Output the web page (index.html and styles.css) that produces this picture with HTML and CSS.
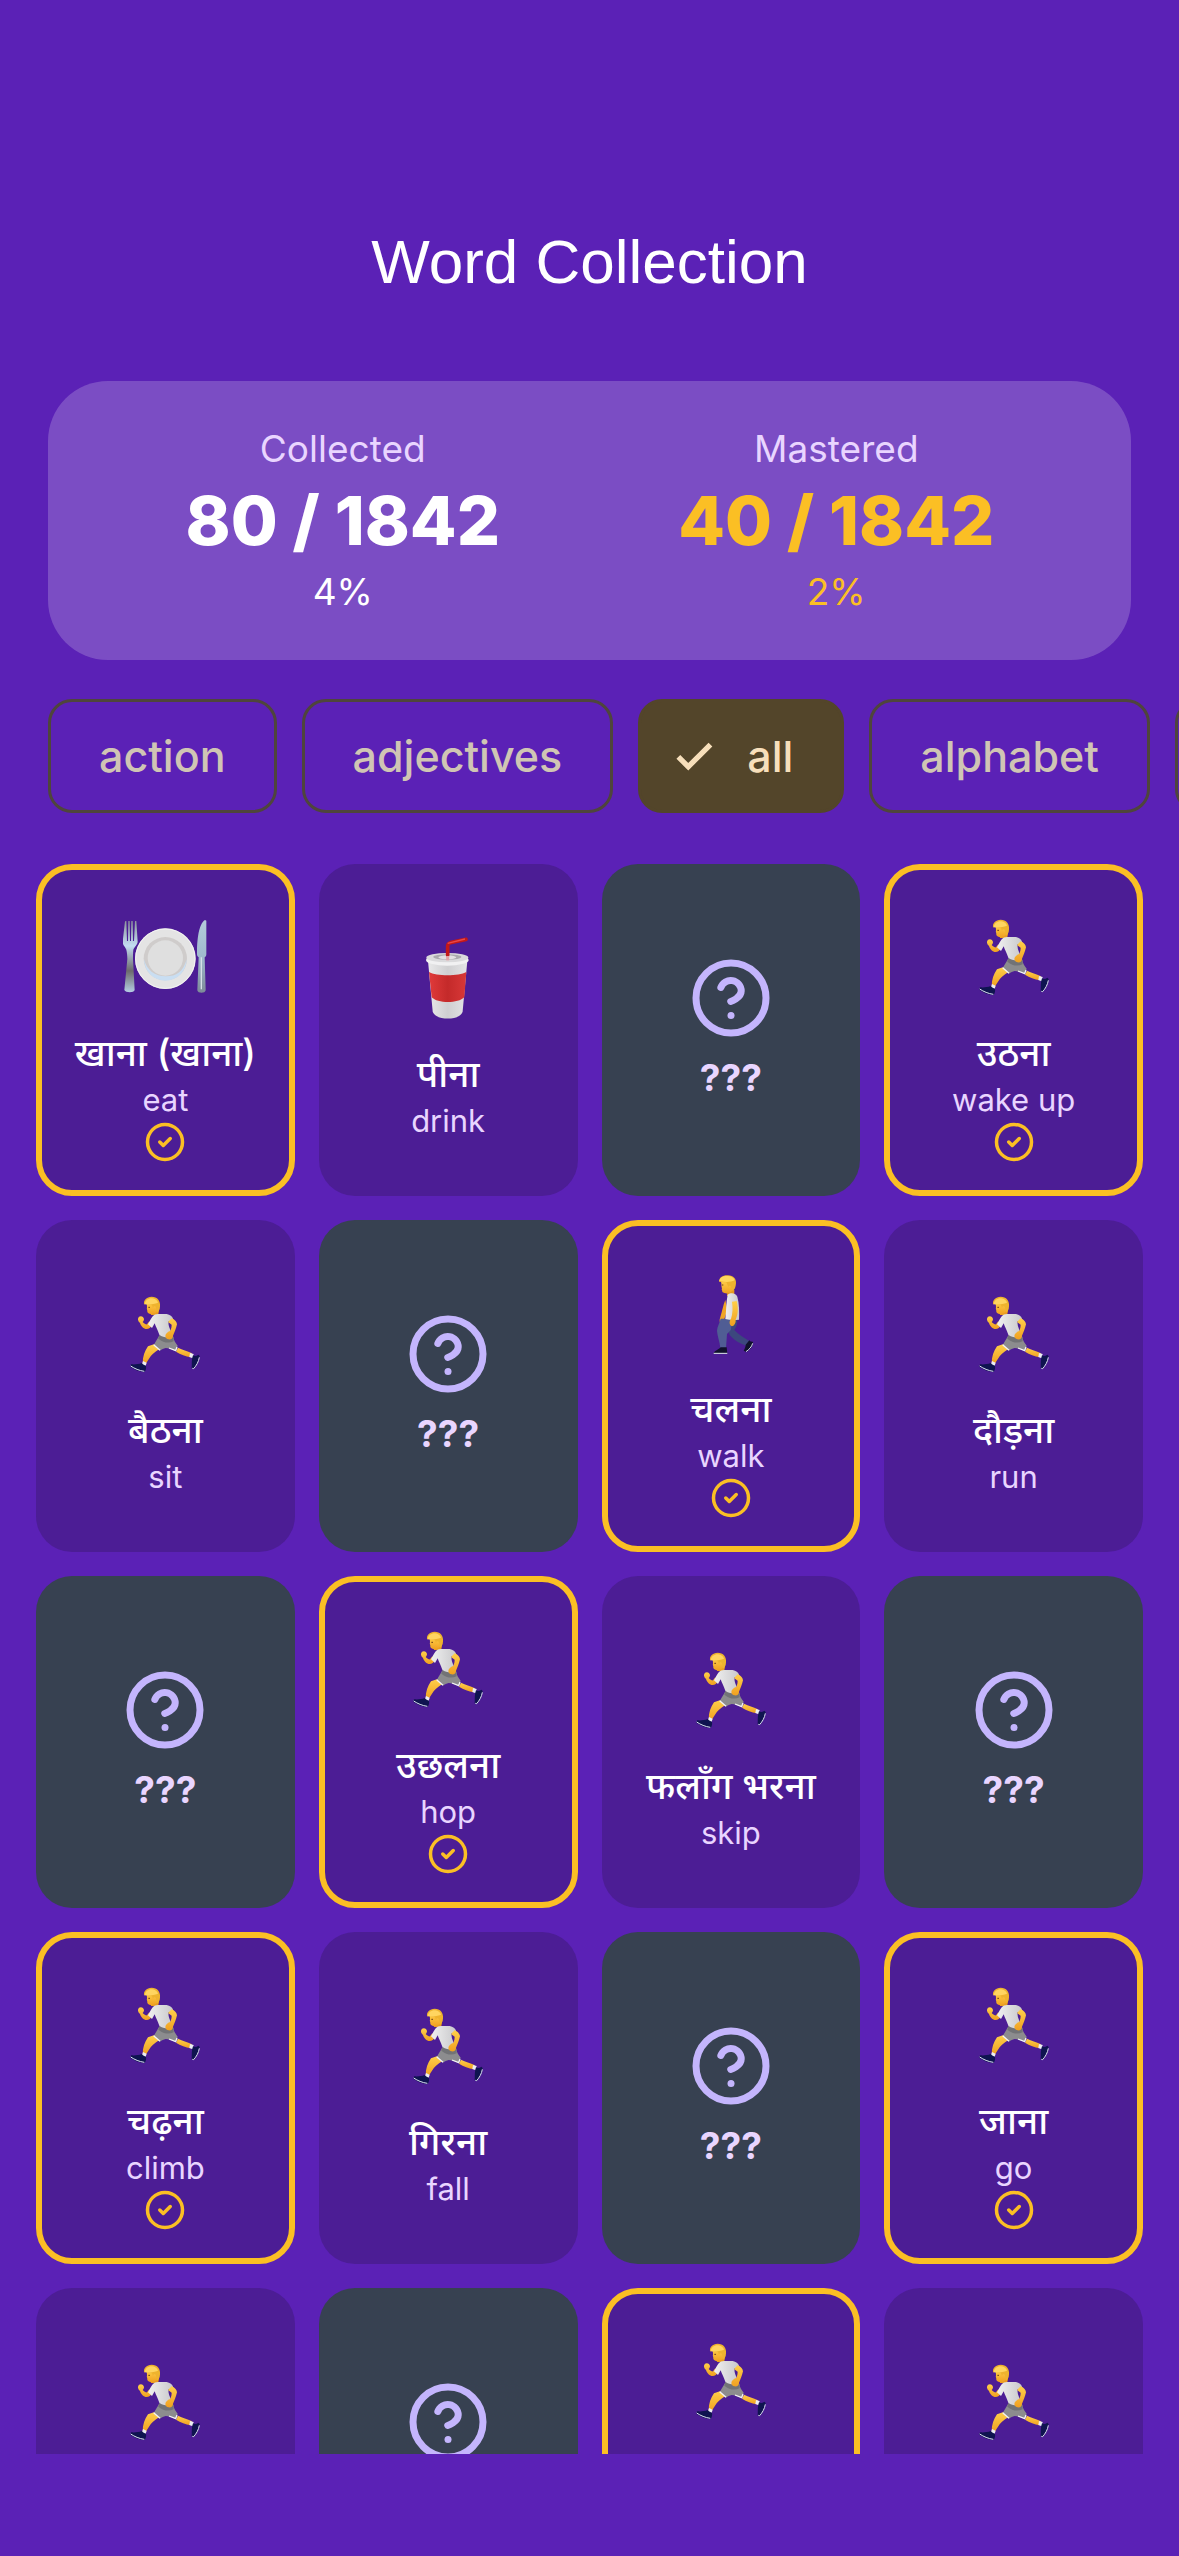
FILE: index.html
```html
<!DOCTYPE html>
<html lang="en">
<head>
    <meta charset="UTF-8">
    <meta name="viewport" content="width=device-width, initial-scale=1.0">
    <title>Word Collection</title>
    <link rel="stylesheet" href="styles.css">
</head>
<body>

<!-- shared icons -->
<svg class="sprite" aria-hidden="true">
  <defs>
    <linearGradient id="skin" x1="0" y1="0" x2="0" y2="1">
      <stop offset="0" stop-color="#ffd04a"/>
      <stop offset="1" stop-color="#f0a020"/>
    </linearGradient>
    <linearGradient id="steel" x1="0" y1="0" x2="0" y2="1">
      <stop offset="0" stop-color="#8d949c"/>
      <stop offset=".35" stop-color="#c3dcf2"/>
      <stop offset=".7" stop-color="#6c6a6c"/>
      <stop offset="1" stop-color="#b5cde4"/>
    </linearGradient>
    <linearGradient id="blade" x1="0" y1="0" x2="0" y2="1">
      <stop offset="0" stop-color="#b4cbdb"/>
      <stop offset=".5" stop-color="#9fbace"/>
      <stop offset="1" stop-color="#7d8b98"/>
    </linearGradient>
    <linearGradient id="red" x1="0" y1="0" x2="1" y2="0">
      <stop offset="0" stop-color="#e03a3a"/>
      <stop offset=".5" stop-color="#c42a2a"/>
      <stop offset="1" stop-color="#d83838"/>
    </linearGradient>
    <linearGradient id="paper" x1="0" y1="0" x2="1" y2="0">
      <stop offset="0" stop-color="#e9e9ea"/>
      <stop offset=".5" stop-color="#cfcfd1"/>
      <stop offset="1" stop-color="#e4e4e6"/>
    </linearGradient>
    <linearGradient id="shirt" x1="0" y1="0" x2="1" y2="0">
      <stop offset="0" stop-color="#f0f0f0"/>
      <stop offset="1" stop-color="#c9c9cc"/>
    </linearGradient>
  </defs>

  <symbol id="help" viewBox="0 0 24 24">
    <g fill="none" stroke="currentColor" stroke-width="2" stroke-linecap="round" stroke-linejoin="round">
      <circle cx="12" cy="12" r="10"/>
      <path d="M9.09 9a3 3 0 0 1 5.83 1c0 2-3 3-3 3"/>
      <path d="M12 17h.01"/>
    </g>
  </symbol>

  <symbol id="mastered" viewBox="0 0 24 24">
    <g fill="none" stroke="currentColor" stroke-width="2" stroke-linecap="round" stroke-linejoin="round">
      <circle cx="12" cy="12" r="10"/>
      <path d="M9 12l2 2 4-4"/>
    </g>
  </symbol>

  <symbol id="tick" viewBox="0 0 24 24">
    <path fill="currentColor" stroke="currentColor" stroke-width=".8" d="M9 16.17L4.83 12l-1.42 1.41L9 19 21 7l-1.41-1.41z"/>
  </symbol>

  <symbol id="runner" viewBox="275 195 252 252">
    <path d="M440 362c14 6 27 10 42 17l-4 12c-15-3-30-8-44-17z" fill="url(#skin)"/>
    <path d="M350 358l22-8 12 16c-16 10-24 18-31 29-5 8-8 12-10 18l-9-3c0-21 6-38 16-52z" fill="url(#skin)"/>
    <path d="M476 378l11 3-3 13-10-4z" fill="#eceef4"/>
    <path d="M485 385c6 3 10 2 16-2l4 4c-1 13-7 27-18 39l-6-2c1-12-1-27 4-39z" fill="#0f1450"/>
    <path d="M504 391c-2 13-9 25-17 34l-4-1" fill="none" stroke="#dfe4f4" stroke-width="3"/>
    <path d="M335 402l11 5-4 12-11-4z" fill="#eceef4"/>
    <path d="M331 408c4 5 8 7 13 8 1 6 0 13-4 19-16-1-31-7-43-16l2-7c11 1 22 0 32-4z" fill="#0f1450"/>
    <path d="M298 417c12 8 26 14 41 16" fill="none" stroke="#dfe4f4" stroke-width="3"/>
    <path d="M384 325l42 4c1 10 6 18 13 27l-5 16-24-8-7-1c-6 2-12 4-17 8l-18-18c5-10 11-18 16-28z" fill="#8c8c8e"/>
    <path d="M384 325l42 4 1 14c-14 6-29 6-46-8z" fill="#727376"/>
    <path d="M367 353l19 17M413 363l20 8 4-11" fill="none" stroke="#f4f4f6" stroke-width="4"/>
    <path d="M357 240h26c1 9 0 17-4 25l-20-1z" fill="#e99d22"/>
    <path d="M354 283l8 12c-4 7-9 11-16 11-9 0-17-8-20-18-7-6-8-14-3-19 7-4 14 0 15 7 0 4-2 7-4 9 5 5 10 8 13 7z" fill="url(#skin)"/>
    <path d="M363 269c6-8 14-9 22-8h21c10 2 17 7 19 14 1 4-1 8-3 10l-10-3c-3 14 6 27 13 45-13 8-30 4-41-4-5-14-11-25-14-34l-8 14-12-11c5-9 8-16 13-23z" fill="url(#shirt)"/>
    <path d="M421 274c9 4 15 10 16 18-3 14-8 25-12 34 0 8-6 13-14 11-8-2-11-9-7-16 5-6 9-8 13-9 3-7 4-14 4-19l-11-8z" fill="url(#skin)"/>
    <path d="M346 224h34l4 23c-6 9-14 14-24 15-6-1-9-3-12-7 1-6-3-8-1-14z" fill="url(#skin)"/>
    <path d="M339 234c-5-14 7-25 22-25 17 0 27 12 25 30-1 8-4 14-9 18l-3-16c-2-5-7-4-9 1l-3-7-22-5z" fill="#eeb32e"/>
    <path d="M340 232c1-12 11-19 23-18 9 1 15 6 17 13-12 4-24 7-40 5z" fill="#ffd560"/>
    <path d="M351 241h5" stroke="#6b4016" stroke-width="3"/>
  </symbol>

  <symbol id="walker" viewBox="297 183 252 252">
    <path d="M406 270c-7 16-9 33-15 51-4 8-2 19 3 24l8-15 10-30z" fill="#efa526"/>
    <path d="M410 326h32c1 12-2 25-9 34 13 14 29 23 45 33l-10 14c-23-9-43-20-52-38-5-12-7-26-6-43z" fill="#3c477e"/>
    <path d="M392 326h34l-3 33-12 13-3 42h-17c-2-20-9-36-10-52 1-14 8-23 11-36z" fill="#505d94"/>
    <path d="M478 391c4 5 7 4 11 4 1 13-9 24-20 31l-8-4c3-7 6-11 6-18z" fill="#10112c"/>
    <path d="M488 400c-3 11-11 19-20 25" fill="none" stroke="#d5dced" stroke-width="3"/>
    <path d="M392 412h18l2 19h-41c1-9 13-10 21-19z" fill="#10112c"/>
    <path d="M371 430h41" stroke="#e8ecf8" stroke-width="3"/>
    <path d="M412 240h21v18h-22z" fill="#e59a20"/>
    <path d="M413 254c11-8 25-4 29 6 6 20 6 47 5 69-13 2-28 2-41-2 3-24 2-50 7-73z" fill="url(#shirt)"/>
    <path d="M426 275l14-2c5 21 5 39-3 56 1 9-3 17-11 20-9-5-9-15-3-23 5-15 6-32 3-51z" fill="url(#skin)"/>
    <path d="M392 212h36l3 23c-4 8-9 14-17 15-6 1-13-1-17-4 1-5-4-6-1-11-3-5 0-14-4-23z" fill="url(#skin)"/>
    <path d="M387 215c0-13 12-20 27-19 17 0 25 11 24 24-1 12-4 20-10 23l-5-10c0-7-5-8-8-2l-6-14z" fill="#eeb32e"/>
    <path d="M388 213c1-10 12-16 25-15 11 0 19 5 21 13-14 7-29 6-46 2z" fill="#ffd75e"/>
    <path d="M396 225h4" stroke="#6b4016" stroke-width="3"/>
  </symbol>

  <symbol id="plate" viewBox="311 195 252 252">
    <path d="M317 214l4-1 2 60h3l1-60h4l1 60h3l1-60h4l1 60h3l3-60h4l4 62c0 9-10 15-13 24-1 8-1 20-1 28l5 93c-2 9-27 9-31 0l9-93c0-9-1-20-3-28-3-8-12-14-11-24z" fill="url(#steel)"/>
    <path d="M561 212v101c0 5-3 8-5 9l3 99c-1 10-24 10-25 0l4-99c-4-3-5-6-5-10 0-42 5-91 24-102z" fill="url(#blade)"/>
    <path d="M546 322v96" stroke="#d6dfe7" stroke-width="4"/>
    <circle cx="438" cy="326" r="91" fill="#e4e4e4"/>
    <circle cx="438" cy="326" r="89" fill="none" stroke="#f3f3f3" stroke-width="3"/>
    <circle cx="438" cy="326" r="65" fill="#cfcccb"/>
    <path d="M374 328a64 64 0 0 0 128 0c-10 38-31 51-62 51-34 0-57-17-66-51z" fill="#c9def2"/>
    <circle cx="438" cy="324" r="53" fill="#dfdfdf"/>
  </symbol>

  <symbol id="cup" viewBox="289 258 252 252">
    <path d="M355 332l14 152c5 29 86 29 90 0l14-152z" fill="url(#paper)"/>
    <path d="M358 366c22 13 89 13 112 0l-6 76c-18 19-81 19-98 0z" fill="url(#red)"/>
    <ellipse cx="413" cy="330" rx="64" ry="17" fill="#f1f1f2"/>
    <ellipse cx="413" cy="323" rx="63" ry="14" fill="#dadadc"/>
    <ellipse cx="413" cy="321" rx="42" ry="8" fill="#aaa9ad"/>
    <ellipse cx="413" cy="322" rx="27" ry="6" fill="#e2e0e2"/>
    <path d="M414 316v-28c0-5 3-8 8-10l47-10" fill="none" stroke="#c31818" stroke-width="11" stroke-linejoin="round" stroke-linecap="round"/>
    <path d="M414 280l52-13" fill="none" stroke="#e94848" stroke-width="4"/>
    <path d="M414 318v13" stroke="#e3a3a6" stroke-width="9"/>
  </symbol>
</svg>

<main class="app">
  <header class="app-bar">
    <h1>Word Collection</h1>
  </header>

  <section class="stats">
    <div class="stat">
      <span class="stat-label">Collected</span>
      <strong class="stat-value">80 / 1842</strong>
      <span class="stat-percent">4%</span>
    </div>
    <div class="stat stat-gold">
      <span class="stat-label">Mastered</span>
      <strong class="stat-value">40 / 1842</strong>
      <span class="stat-percent">2%</span>
    </div>
  </section>

  <div class="chips">
    <button type="button" class="chip">action</button>
    <button type="button" class="chip">adjectives</button>
    <button type="button" class="chip active" aria-pressed="true"><svg class="chip-icon"><use href="#tick"/></svg>all</button>
    <button type="button" class="chip">alphabet</button>
    <button type="button" class="chip">animals</button>
  </div>

  <ul class="cards">
    <li class="card mastered">
      <svg class="picture"><use href="#plate"/></svg>
      <span class="word" lang="hi">खाना (खाना)</span>
      <span class="meaning">eat</span>
      <svg class="badge"><use href="#mastered"/></svg>
    </li>
    <li class="card">
      <svg class="picture"><use href="#cup"/></svg>
      <span class="word" lang="hi">पीना</span>
      <span class="meaning">drink</span>
    </li>
    <li class="card locked">
      <svg class="help"><use href="#help"/></svg>
      <span class="word">???</span>
    </li>
    <li class="card mastered">
      <svg class="picture"><use href="#runner"/></svg>
      <span class="word" lang="hi">उठना</span>
      <span class="meaning">wake up</span>
      <svg class="badge"><use href="#mastered"/></svg>
    </li>

    <li class="card">
      <svg class="picture"><use href="#runner"/></svg>
      <span class="word" lang="hi">बैठना</span>
      <span class="meaning">sit</span>
    </li>
    <li class="card locked">
      <svg class="help"><use href="#help"/></svg>
      <span class="word">???</span>
    </li>
    <li class="card mastered">
      <svg class="picture"><use href="#walker"/></svg>
      <span class="word" lang="hi">चलना</span>
      <span class="meaning">walk</span>
      <svg class="badge"><use href="#mastered"/></svg>
    </li>
    <li class="card">
      <svg class="picture"><use href="#runner"/></svg>
      <span class="word" lang="hi">दौड़ना</span>
      <span class="meaning">run</span>
    </li>

    <li class="card locked">
      <svg class="help"><use href="#help"/></svg>
      <span class="word">???</span>
    </li>
    <li class="card mastered">
      <svg class="picture"><use href="#runner"/></svg>
      <span class="word" lang="hi">उछलना</span>
      <span class="meaning">hop</span>
      <svg class="badge"><use href="#mastered"/></svg>
    </li>
    <li class="card">
      <svg class="picture"><use href="#runner"/></svg>
      <span class="word" lang="hi">फलाँग भरना</span>
      <span class="meaning">skip</span>
    </li>
    <li class="card locked">
      <svg class="help"><use href="#help"/></svg>
      <span class="word">???</span>
    </li>

    <li class="card mastered">
      <svg class="picture"><use href="#runner"/></svg>
      <span class="word" lang="hi">चढ़ना</span>
      <span class="meaning">climb</span>
      <svg class="badge"><use href="#mastered"/></svg>
    </li>
    <li class="card">
      <svg class="picture"><use href="#runner"/></svg>
      <span class="word" lang="hi">गिरना</span>
      <span class="meaning">fall</span>
    </li>
    <li class="card locked">
      <svg class="help"><use href="#help"/></svg>
      <span class="word">???</span>
    </li>
    <li class="card mastered">
      <svg class="picture"><use href="#runner"/></svg>
      <span class="word" lang="hi">जाना</span>
      <span class="meaning">go</span>
      <svg class="badge"><use href="#mastered"/></svg>
    </li>

    <li class="card">
      <svg class="picture"><use href="#runner"/></svg>
      <span class="word" lang="hi">आना</span>
      <span class="meaning">come</span>
    </li>
    <li class="card locked">
      <svg class="help"><use href="#help"/></svg>
      <span class="word">???</span>
    </li>
    <li class="card mastered">
      <svg class="picture"><use href="#runner"/></svg>
      <span class="word" lang="hi">लाना</span>
      <span class="meaning">bring</span>
      <svg class="badge"><use href="#mastered"/></svg>
    </li>
    <li class="card">
      <svg class="picture"><use href="#runner"/></svg>
      <span class="word" lang="hi">देना</span>
      <span class="meaning">give</span>
    </li>
  </ul>
</main>

</body>
</html>
```
FILE: styles.css
```css
*{
  box-sizing: border-box;
}
body{
  margin: 0;
  font-family: 'Inter', 'Noto Sans Devanagari', 'Noto Sans', sans-serif;
  background-color: #5b21b6;
  color: #fff;
}
.sprite{
  position: absolute;
  width: 0;
  height: 0;
}

/* page */
.app{
  display: flex;
  flex-direction: column;
  height: 100vh;
  padding: 177px 0 102px;
}
.app-bar{
  display: flex;
  align-items: center;
  justify-content: center;
  flex: none;
  height: 168px;
  margin-bottom: 36px;
}
.app-bar h1{
  margin: 0;
  font-family: 'Liberation Sans', sans-serif;
  font-size: 62px;
  font-weight: 400;
}

/* totals */
.stats{
  display: flex;
  flex: none;
  margin: 0 48px;
  padding: 42px 48px;
  border-radius: 60px;
  background-color: rgba(255, 255, 255, 0.2);
}
.stat{
  display: flex;
  flex: 1;
  flex-direction: column;
  align-items: center;
}
.stat-label,
.stat-percent{
  font-size: 37px;
  line-height: 52px;
}
.stat-label{
  color: #e9d5ff;
}
.stat-value{
  font-size: 68px;
  font-weight: 800;
  line-height: 91px;
}
.stat-gold .stat-value,
.stat-gold .stat-percent{
  color: #fbbf24;
}

/* category filter */
.chips{
  display: flex;
  flex: none;
  gap: 25px;
  margin: 39px 0 51px;
  padding-left: 48px;
  overflow: hidden;
}
.chip{
  display: flex;
  align-items: center;
  flex: none;
  gap: 30px;
  height: 114px;
  padding: 0 48px;
  border: 3px solid #4f453c;
  border-radius: 24px;
  background: none;
  font-family: inherit;
  font-size: 43px;
  font-weight: 500;
  color: #d0c5b4;
  cursor: pointer;
}
.chip.active{
  padding-left: 30px;
  border-color: #53452a;
  background-color: #53452a;
  color: #f7dfbb;
}
.chip-icon{
  width: 46px;
  height: 46px;
}

/* word cards */
.cards{
  display: grid;
  grid-template-columns: repeat(4, 1fr);
  grid-auto-rows: 332px;
  gap: 24px;
  flex: 1;
  min-height: 0;
  margin: 0;
  padding: 0 36px;
  list-style: none;
  overflow: hidden;
}
.card{
  display: flex;
  flex-direction: column;
  align-items: center;
  justify-content: center;
  border-radius: 36px;
  background-color: #4c1d95;
}
.card.mastered{
  border: 6px solid #fbbf24;
}
.card.locked{
  background-color: #374151;
}
.picture{
  width: 84px;
  height: 84px;
  margin: 18px 0 28px;
}
.help{
  width: 84px;
  height: 84px;
  margin-bottom: 12px;
  color: #c4b5fd;
}
.word{
  font-size: 37px;
  font-weight: 500;
  line-height: 52px;
  white-space: nowrap;
}
.locked .word{
  font-weight: 700;
  color: #e9d5ff;
}
.meaning{
  font-size: 31px;
  line-height: 42px;
  color: #e9d5ff;
}
.badge{
  width: 42px;
  height: 42px;
  color: #fbbf24;
}
```
